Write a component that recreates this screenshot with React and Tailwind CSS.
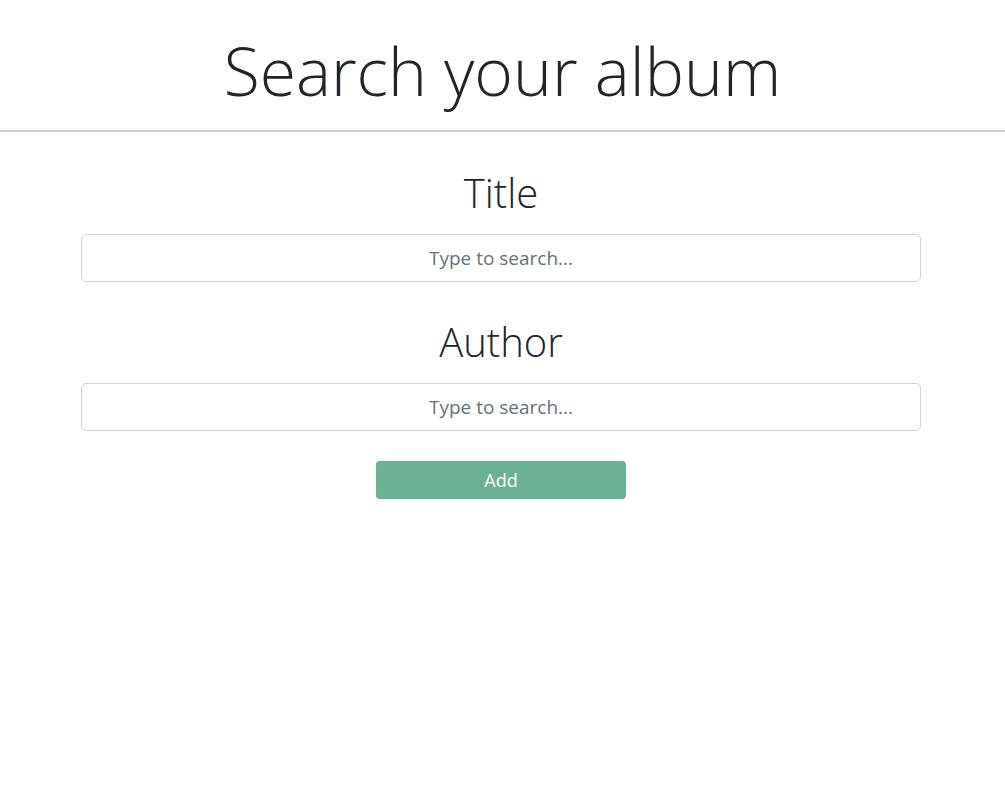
import React from 'react';

const Field = ({ label }) => (
  <div className="flex flex-col items-center">
    <h2 className="text-[40px] font-light leading-[48px] text-[#212529] mb-[17px]">{label}</h2>
    <input
      type="text"
      placeholder="Type to search..."
      className="w-full h-[48px] px-4 text-center text-[19px] text-[#495057] placeholder:text-[#62717e] border border-[#ced4da] rounded-[5px] outline-none"
    />
  </div>
);

const App = () => {
  return (
    <div className="min-h-screen bg-white" style={{ fontFamily: '"Open Sans", "Noto Sans", sans-serif' }}>
      <header className="border-b-2 border-[#cccccc] h-[132px] pt-[31px] text-center">
        <h1 className="text-[66px] font-light leading-[78px] text-[#212529]">Search your album</h1>
      </header>
      <main className="pl-[81px] pt-[37px]">
        <div className="w-[840px] flex flex-col">
          <Field label="Title" />
          <div className="mt-[36px]">
            <Field label="Author" />
          </div>
          <div className="flex justify-center mt-[30px]">
            <button className="w-[250px] h-[38px] rounded-[4px] bg-[#6ab092] text-white text-[18px]">Add</button>
          </div>
        </div>
      </main>
    </div>
  );
};

export default App;
